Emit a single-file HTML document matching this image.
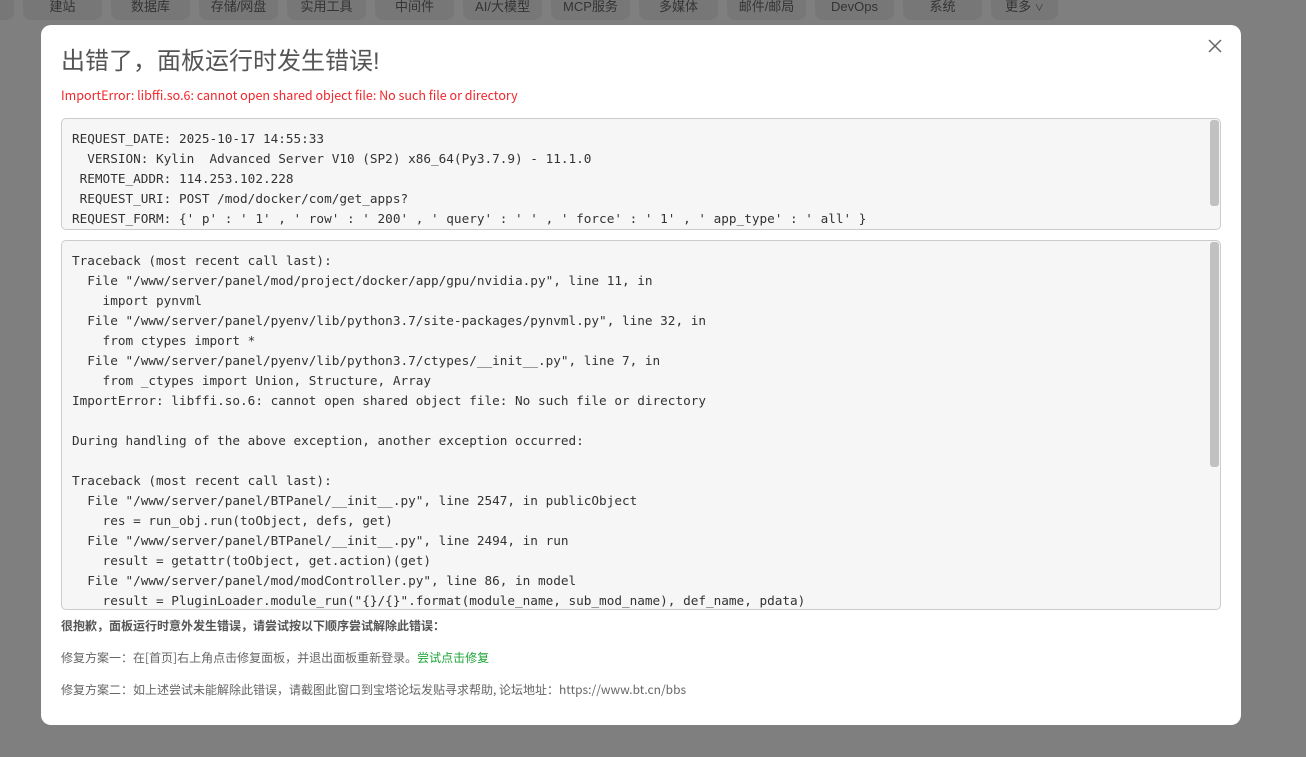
<!DOCTYPE html>
<html><head><meta charset="utf-8"><style>
body{margin:0;width:1306px;height:757px;background:#7f7f7f;position:relative;overflow:hidden;font-family:"Liberation Sans","Noto Sans CJK SC",sans-serif}
.tab{position:absolute;top:-10px;height:30px;width:79px;background:#777;border-radius:8px;color:#333;font-size:13px;text-align:center;line-height:33px;box-sizing:border-box}
.modal{position:absolute;left:41px;top:25px;width:1200px;height:700px;background:#fff;border-radius:10px}
h1{position:absolute;left:20px;top:16px;margin:0;font-weight:normal;font-size:24px;color:#555}
.err{position:absolute;left:20px;top:60px;font-size:12.5px;color:#f0262b;font-family:"Noto Sans CJK SC",sans-serif}
.box{position:absolute;left:20px;width:1158px;background:#f6f6f6;border:1px solid #ccc;border-radius:5px;overflow:hidden}
.box pre{margin:0;padding:10px 10px;font-family:"DejaVu Sans Mono","Liberation Mono",monospace;font-size:12.7px;line-height:20px;color:#333;white-space:pre}
.sb{position:absolute;right:1px;top:1px;width:9px;background:#c1c1c1;border-radius:3px}
.t{position:absolute;left:20px;font-size:12px;color:#666;font-family:"Noto Sans CJK SC",sans-serif}
.x{position:absolute;left:1166px;top:13px}
</style></head><body>
<div class="tab" style="left:-65px"></div>
<div class="tab" style="left:23px">建站</div>
<div class="tab" style="left:111px">数据库</div>
<div class="tab" style="left:199px">存储/网盘</div>
<div class="tab" style="left:287px">实用工具</div>
<div class="tab" style="left:375px">中间件</div>
<div class="tab" style="left:463px">AI/大模型</div>
<div class="tab" style="left:551px">MCP服务</div>
<div class="tab" style="left:639px">多媒体</div>
<div class="tab" style="left:727px">邮件/邮局</div>
<div class="tab" style="left:815px">DevOps</div>
<div class="tab" style="left:903px">系统</div>
<div class="tab" style="left:991px;width:67px">更多 <span style="font-size:9px">∨</span></div>
<div class="modal">
<h1>出错了，面板运行时发生错误!</h1>
<svg class="x" width="16" height="16" viewBox="0 0 16 16"><path d="M2 2L14 14M14 2L2 14" stroke="#666" stroke-width="1.5"/></svg>
<div class="err">ImportError: libffi.so.6: cannot open shared object file: No such file or directory</div>
<div class="box" style="top:93px;height:110px"><pre>REQUEST_DATE: 2025-10-17 14:55:33
  VERSION: Kylin  Advanced Server V10 (SP2) x86_64(Py3.7.9) - 11.1.0
 REMOTE_ADDR: 114.253.102.228
 REQUEST_URI: POST /mod/docker/com/get_apps?
REQUEST_FORM: {' p' : ' 1' , ' row' : ' 200' , ' query' : ' ' , ' force' : ' 1' , ' app_type' : ' all' }</pre><div class="sb" style="height:86px"></div></div>
<div class="box" style="top:215px;height:368px"><pre>Traceback (most recent call last):
  File "/www/server/panel/mod/project/docker/app/gpu/nvidia.py", line 11, in 
    import pynvml
  File "/www/server/panel/pyenv/lib/python3.7/site-packages/pynvml.py", line 32, in 
    from ctypes import *
  File "/www/server/panel/pyenv/lib/python3.7/ctypes/__init__.py", line 7, in 
    from _ctypes import Union, Structure, Array
ImportError: libffi.so.6: cannot open shared object file: No such file or directory

During handling of the above exception, another exception occurred:

Traceback (most recent call last):
  File "/www/server/panel/BTPanel/__init__.py", line 2547, in publicObject
    res = run_obj.run(toObject, defs, get)
  File "/www/server/panel/BTPanel/__init__.py", line 2494, in run
    result = getattr(toObject, get.action)(get)
  File "/www/server/panel/mod/modController.py", line 86, in model
    result = PluginLoader.module_run("{}/{}".format(module_name, sub_mod_name), def_name, pdata)</pre><div class="sb" style="height:225px"></div></div>
<div class="t" style="top:592px;font-weight:bold;color:#555">很抱歉，面板运行时意外发生错误，请尝试按以下顺序尝试解除此错误：</div>
<div class="t" style="top:624px">修复方案一：在[首页]右上角点击修复面板，并退出面板重新登录。<span style="color:#20a53a">尝试点击修复</span></div>
<div class="t" style="top:656px">修复方案二：如上述尝试未能解除此错误，请截图此窗口到宝塔论坛发贴寻求帮助, 论坛地址：https://www.bt.cn/bbs</div>
</div>
</body></html>
